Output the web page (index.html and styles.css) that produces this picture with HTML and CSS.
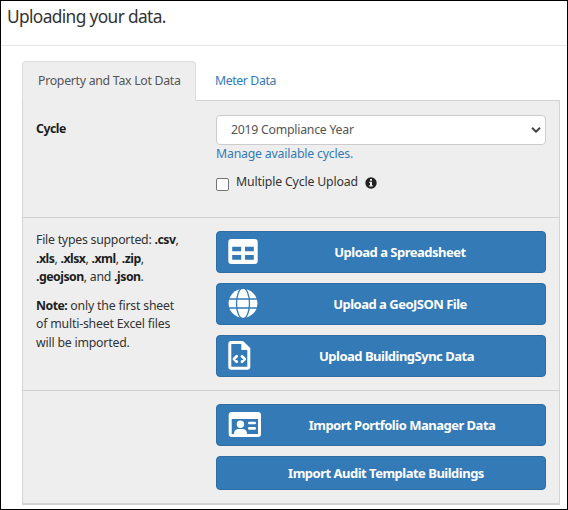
FILE: index.html
```html
<!DOCTYPE html>
<html lang="en">
<head>
<meta charset="utf-8">
<title>Uploading your data.</title>
<link rel="stylesheet" href="styles.css">
</head>
<body>
<main class="dialog">
  <header class="header"><h1>Uploading your data.</h1></header>
  <nav class="tabs">
    <a class="tab active">Property and Tax Lot Data</a>
    <a class="tab">Meter Data</a>
  </nav>
  <div class="panel">
    <section class="row row-cycle">
      <div class="side"><b>Cycle</b></div>
      <div class="content">
        <div class="select"><span>2019 Compliance Year</span>
          <svg width="10" height="6" viewBox="0 0 10 6"><path d="M1 .8 5 4.6 9 .8" fill="none" stroke="#444" stroke-width="2"/></svg>
        </div>
        <a class="manage">Manage available cycles.</a>
        <div class="check"><span class="box"></span><span class="check-label">Multiple Cycle Upload</span>
          <svg width="12" height="12" viewBox="0 0 12 12"><circle cx="6" cy="6" r="5.7" fill="#222"/><path d="M5 2h2v1.7H5zM4.3 4.8H7v3.4h.8v1.2H4.2V8.2H5V6h-.7z" fill="#eee"/></svg>
        </div>
      </div>
    </section>
    <section class="row row-files">
      <div class="side">
        <p class="types">File types supported: <b>.csv</b>,<br><b>.xls</b>, <b>.xlsx</b>, <b>.xml</b>, <b>.zip</b>,<br><b>.geojson</b>, and <b>.json</b>.</p>
        <p><b>Note:</b> only the first sheet<br>of multi-sheet Excel files<br>will be imported.</p>
      </div>
      <div class="content buttons">
        <a class="btn"><svg class="icon" width="36" height="30" viewBox="0 0 36 30"><path fill="#fff" fill-rule="evenodd" d="M6.300 2h23.400q3 0 3 3v19q0 3-3 3H6.300q-3 0-3-3V5q0-3 3-3ZM7.200 9.700v4.600h9V9.700ZM20 9.700v4.600h8.800V9.700ZM7.200 18v4.700h9V18ZM20 18v4.700h8.800V18Z"/></svg><span>Upload a Spreadsheet</span></a>
        <a class="btn"><svg class="icon" width="36" height="30" viewBox="0 0 36 30"><circle cx="18" cy="14.400" r="14.400" fill="#fff"/><g fill="none" stroke="#337ab7" stroke-width="1.300"><path d="M2 10h32M2 19h32"/><ellipse cx="18" cy="14.400" rx="6.500" ry="15.500"/></g></svg><span>Upload a GeoJSON File</span></a>
        <a class="btn code"><svg class="icon" width="36" height="30" viewBox="0 0 36 30"><path fill="#fff" fill-rule="evenodd" d="M6.300 0H18l7.300 7v18.700q0 3-3 3h-16q-3 0-3-3V3q0-3 3-3ZM6.300 3v22.700h16V9h-6V3Z"/><path d="M11.700 15.300 9 18l2.700 2.700M17 15.300l2.700 2.700-2.700 2.700" fill="none" stroke="#fff" stroke-width="2.800" stroke-linecap="round" stroke-linejoin="round"/></svg><span>Upload BuildingSync Data</span></a>
      </div>
    </section>
    <section class="row row-import">
      <div class="side"></div>
      <div class="content buttons">
        <a class="btn wide-icon"><svg class="icon" width="38" height="30" viewBox="0 0 38 30"><path fill="#fff" fill-rule="evenodd" d="M6.700 2h26.300q3 0 3 3v19q0 3-3 3H6.700q-3 0-3-3V5q0-3 3-3ZM6.700 9v15H33V9Z"/><circle cx="15.400" cy="14.200" r="3.700" fill="#fff"/><path d="M9 24q0-5 5-5h3q5 0 5 5Z" fill="#fff"/><path d="M24.300 13h5.400M24.300 18.400h5.400" stroke="#fff" stroke-width="2.600" stroke-linecap="round"/></svg><span>Import Portfolio Manager Data</span></a>
        <a class="btn short"><span>Import Audit Template Buildings</span></a>
      </div>
    </section>
  </div>
</main>
</body>
</html>
```
FILE: styles.css
```css
* { box-sizing: border-box; }
body { margin: 0; background: #fff; color: #333; font: 12.3px/18.6px "Noto Sans", "Open Sans", sans-serif; letter-spacing: -.28px; white-space: nowrap; }
b { color: #1d1d1d; letter-spacing: -.5px; }
p { margin: 0 0 10px; letter-spacing: -.2px; }
.types { letter-spacing: -.24px; }
.dialog { height: 510px; border: 1px solid #000; overflow: hidden; }
.header { height: 45px; padding: 4px 6px; border-bottom: 1px solid #e5e5e5; }
h1 { margin: 0; font-size: 17.3px; line-height: 24px; font-weight: 400; letter-spacing: -.62px; }
.tabs { display: flex; height: 39px; margin: 15px 0 0 21px; }
.tab { height: 40px; padding: 10px 15px; color: #337ab7; border: 1px solid transparent; }
.active { width: 174px; color: #555; background: #eee; border-color: #ddd #ddd transparent; border-radius: 4px 4px 0 0; z-index: 1; border-bottom: 0; }
.tab + .tab { padding-left: 18px; letter-spacing: -.4px; }
.panel { width: 538px; margin-left: 21px; background: #eee; border: 1px solid #d3d3d3; border-bottom-width: 2px; }
.row { display: flex; padding: 13px 13px 0; }
.row + .row { border-top: 1px solid #d3d3d3; }
.row-cycle { height: 116px; padding-top: 14px; }
.row-files { height: 173px; }
.row-import { height: 113px; }
.side { width: 180px; flex: none; }
.row-cycle .side { padding-top: 5px; }
.content { width: 330px; }
.select { height: 30px; display: flex; align-items: center; justify-content: space-between; padding: 0 4px 0 14px; border: 1px solid #ccc; border-radius: 4px; background: #fff; color: #555; letter-spacing: -.25px; }
.manage { display: block; color: #337ab7; letter-spacing: -.2px; }
.check { display: flex; align-items: center; height: 20px; margin-top: 9px; letter-spacing: -.16px; }
.box { width: 13px; height: 13px; margin: 3px 7px 0 0; border: 1px solid #767676; border-radius: 2px; background: #fff; }
.check svg { margin-left: 7px; }
.buttons { display: grid; gap: 10px; align-content: start; }
.btn { position: relative; display: flex; align-items: center; justify-content: center; height: 42px; padding-left: 38px; background: #337ab7; border: 1px solid #2e6da4; border-radius: 4px; color: #fff; font-size: 13px; font-weight: 700; letter-spacing: -.5px; }
.code { padding-left: 31px; }
.wide-icon { padding-left: 42px; }
.short { height: 34px; padding-left: 10px; }
.icon { position: absolute; left: 8px; top: 5px; }
```
